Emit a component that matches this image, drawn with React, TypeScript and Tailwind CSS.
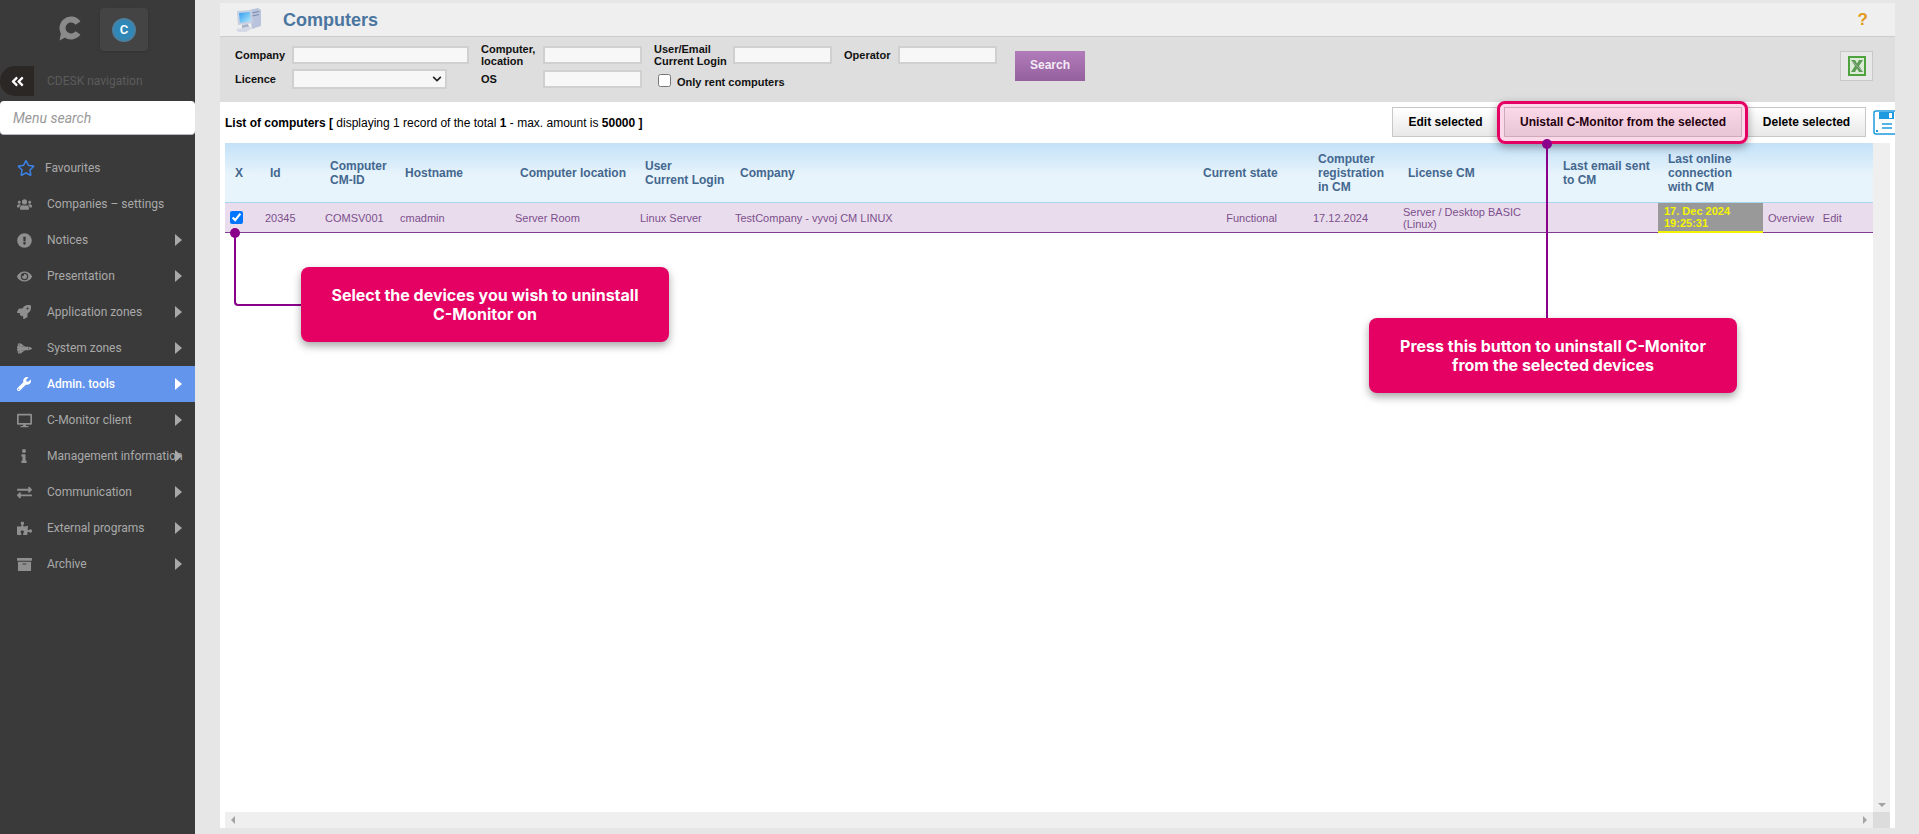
import type { ReactNode } from "react"
import {
    FaAngleDoubleLeft,
    FaArchive,
    FaChevronDown,
    FaDesktop,
    FaExchangeAlt,
    FaExclamationCircle,
    FaEye,
    FaInfo,
    FaPuzzlePiece,
    FaRegStar,
    FaRocket,
    FaSpaceShuttle,
    FaUsers,
    FaWrench,
} from "react-icons/fa"

const menu: { label: string; icon: ReactNode; active?: boolean }[] = [
    { label: "Notices", icon: <FaExclamationCircle size={15} /> },
    { label: "Presentation", icon: <FaEye size={15} /> },
    { label: "Application zones", icon: <FaRocket size={14} /> },
    { label: "System zones", icon: <FaSpaceShuttle size={15} /> },
    { label: "Admin. tools", icon: <FaWrench size={14} />, active: true },
    { label: "C-Monitor client", icon: <FaDesktop size={15} /> },
    { label: "Management information", icon: <FaInfo size={14} /> },
    { label: "Communication", icon: <FaExchangeAlt size={15} /> },
    { label: "External programs", icon: <FaPuzzlePiece size={15} /> },
    { label: "Archive", icon: <FaArchive size={15} /> },
]

function Sidebar() {
    return (
        <aside className="w-[195px] shrink-0 bg-[#3a3a3a] font-['Roboto',sans-serif] text-xs text-[#a9a9a9]">
            <div className="flex h-[66px] items-start pl-[59px] pt-2">
                <svg width="24" height="25" viewBox="0 0 24 25" className="mt-2">
                    <path d="M18.960 7.120A8.500 8.500 0 1 0 18.960 16.880" fill="none" stroke="#8a8a8a" strokeWidth="6" />
                    <path d="M0.500 24.500L8 20.500 2.500 14z" fill="#8a8a8a" />
                </svg>
                <div className="ml-[17px] flex h-[43px] w-[48px] items-center justify-center rounded bg-[#444444] shadow-sm">
                    <div className="flex size-6 items-center justify-center rounded-full border-2 border-[#4a7f9f] bg-[#2f88b8] text-[13px] font-semibold text-white">
                        C
                    </div>
                </div>
            </div>
            <div className="flex h-[30px] items-center">
                <div className="flex h-[30px] w-[34px] items-center justify-center rounded-l-full bg-[#2b2725] text-white">
                    <FaAngleDoubleLeft size={15} />
                </div>
                <span className="ml-[13px] text-[#5c5c5c]">CDESK navigation</span>
            </div>
            <div className="mt-[5px] flex h-[34px] items-center rounded-sm border-b border-[#b8b8c0] bg-white pl-[13px] text-sm italic text-[#999999]">
                Menu search
            </div>
            <nav className="mt-[15px]">
                <div className="flex h-9 items-center pl-[17px]">
                    <FaRegStar size={18} className="text-[#3b82e6]" />
                    <span className="ml-[10px]">Favourites</span>
                </div>
                <div className="flex h-9 items-center pl-[17px]">
                    <span className="flex w-[30px] text-[#8f8f8f]">
                        <FaUsers size={15} />
                    </span>
                    <span>Companies – settings</span>
                </div>
                {menu.map((item) => (
                    <div
                        key={item.label}
                        className={
                            item.active
                                ? "flex h-9 items-center bg-[#6495ed] pl-[17px] font-medium text-white"
                                : "flex h-9 items-center pl-[17px]"
                        }
                    >
                        <span className={item.active ? "flex w-[30px] text-white" : "flex w-[30px] text-[#8f8f8f]"}>
                            {item.icon}
                        </span>
                        <span className="w-[128px] whitespace-nowrap">{item.label}</span>
                        <span
                            className={
                                item.active
                                    ? "relative border-y-[6px] border-l-[7px] border-y-transparent border-l-white"
                                    : "relative border-y-[6px] border-l-[7px] border-y-transparent border-l-[#a9a9a9]"
                            }
                        />
                    </div>
                ))}
            </nav>
        </aside>
    )
}

function ComputerIcon() {
    return (
        <svg width="26" height="24" viewBox="0 0 26 24">
            <defs>
                <linearGradient id="screen" x1="0" y1="0" x2="1" y2="1">
                    <stop offset="0" stopColor="#2f9cf0" />
                    <stop offset="1" stopColor="#b8ecfb" />
                </linearGradient>
            </defs>
            <path d="M14 2l9-2 3 2v16l-9 3z" fill="#b9c4dc" />
            <path d="M17 5l7-1.500M17 8l7-1.500" stroke="#7886aa" strokeWidth="1" />
            <path d="M2 3l15-1 1 13-15 2z" fill="#c7cfe2" />
            <path d="M4 5l11-1 1 9-11 2z" fill="url(#screen)" />
            <path d="M7 17l6-1 1 3-7 1z" fill="#a8b2ca" />
            <path d="M1 21l14-2 3 1-7 4H3z" fill="#d5dae6" />
        </svg>
    )
}

function ExcelIcon() {
    return (
        <svg width="18" height="20" viewBox="0 0 18 20">
            <rect x="1" y="1" width="16" height="18" fill="#dcebd6" stroke="#4ea33f" strokeWidth="2" />
            <path d="M3 4h4l2 3.500L11 4h4l-4 6 4 6h-4l-2-3.500L7 16H3l4-6z" fill="#5c9d55" />
            <path d="M4 5l10 10" stroke="#a3a8a3" strokeWidth="1" />
        </svg>
    )
}

function SaveIcon() {
    return (
        <svg width="28" height="25" viewBox="0 0 28 25" className="-mr-[11px] ml-[2px] shrink-0">
            <path d="M3 1h20l4 4v17a2 2 0 0 1-2 2H3a2 2 0 0 1-2-2V3a2 2 0 0 1 2-2z" fill="#fff" stroke="#1e9be0" strokeWidth="1.500" />
            <path d="M6 2h15v7H6z" fill="#1e9be0" />
            <path d="M16 3h3v5h-3z" fill="#fff" />
            <path d="M9 14h10M9 18h10" stroke="#1e9be0" strokeWidth="1.500" />
            <rect x="3" y="20" width="2" height="2" fill="#1e9be0" />
        </svg>
    )
}

function FieldLabel({ children, className }: { children: ReactNode; className: string }) {
    return <div className={`text-[11px] leading-3 font-bold text-[#111] ${className}`}>{children}</div>
}

function Field({ className }: { className: string }) {
    return <input className={`h-[18px] border-2 border-[#d0d0d0] bg-[#f7f7f7] ${className}`} />
}

function FilterBar() {
    return (
        <div className="flex h-[65px] bg-[#dedede] pl-[15px]">
            <div className="flex w-[234px] flex-col pt-[9px]">
                <div className="flex h-[18px] items-center">
                    <FieldLabel className="w-[57px]">Company</FieldLabel>
                    <Field className="w-[177px]" />
                </div>
                <div className="mt-[5px] flex h-5 items-center">
                    <FieldLabel className="w-[57px]">Licence</FieldLabel>
                    <div className="relative h-5 w-[155px] border-2 border-[#d0d0d0] bg-[#f7f7f7]">
                        <FaChevronDown size={10} className="absolute right-[3px] top-[3px] text-[#222]" />
                    </div>
                </div>
            </div>
            <div className="ml-3 flex w-[161px] flex-col pt-[9px]">
                <div className="flex h-[18px] items-center">
                    <FieldLabel className="w-[62px]">
                        Computer,
                        <br />
                        location
                    </FieldLabel>
                    <Field className="w-[99px]" />
                </div>
                <div className="mt-[6px] flex h-[18px] items-center">
                    <FieldLabel className="w-[62px]">OS</FieldLabel>
                    <Field className="w-[99px]" />
                </div>
            </div>
            <div className="ml-3 flex w-[178px] flex-col pt-[9px]">
                <div className="flex h-[18px] items-center">
                    <FieldLabel className="w-[79px]">
                        User/Email
                        <br />
                        Current Login
                    </FieldLabel>
                    <Field className="w-[99px]" />
                </div>
                <label className="mt-[10px] flex items-start pl-[4px]">
                    <input type="checkbox" className="m-0 size-[13px]" />
                    <span className="ml-[6px] text-[11px] font-bold text-[#111]">Only rent computers</span>
                </label>
            </div>
            <div className="ml-3 flex h-fit items-center pt-[9px]">
                <FieldLabel className="w-[54px]">Operator</FieldLabel>
                <Field className="w-[99px]" />
            </div>
            <div className="ml-[18px] mt-[14px] flex h-[30px] w-[70px] items-center justify-center bg-gradient-to-b from-[#b27cba] to-[#95609e] pb-[2px] text-xs font-bold text-[#f4eaf6]">
                Search
            </div>
            <div className="ml-auto mr-[22px] mt-[14px] flex h-[30px] w-[33px] items-center justify-center border border-[#c8c8c8] bg-[#e8e8e8]">
                <ExcelIcon />
            </div>
        </div>
    )
}

const cols = [35, 60, 75, 115, 125, 95, 463, 115, 90, 155, 105, 105, 110]

const headers: ReactNode[] = [
    "X",
    "Id",
    <>Computer<br />CM-ID</>,
    "Hostname",
    "Computer location",
    <>User<br />Current Login</>,
    "Company",
    "Current state",
    <>Computer<br />registration<br />in CM</>,
    "License CM",
    <>Last email sent<br />to CM</>,
    <>Last online<br />connection<br />with CM</>,
    "",
]

function ComputersTable() {
    return (
        <table className="w-[1648px] table-fixed border-collapse text-[11px] text-[#7c4f8c]">
            <colgroup>
                {cols.map((w, i) => (
                    <col key={i} style={{ width: w }} />
                ))}
            </colgroup>
            <thead>
                <tr className="h-[59px] bg-gradient-to-b from-[#c3e1f8] to-[#e8f4fb] to-55% text-left text-xs leading-[14px] font-bold text-[#44678f]">
                    {headers.map((h, i) => (
                        <th key={i} className="pl-[10px] pt-[2px] font-bold">
                            {h}
                        </th>
                    ))}
                </tr>
            </thead>
            <tbody>
                <tr className="h-[30px] border-t border-b border-t-[#a8d4ee] border-b-[#7f3f8f] bg-[#e9dded] leading-3">
                    <td className="pl-[5px]">
                        <input type="checkbox" defaultChecked className="m-0 block size-[13px]" />
                    </td>
                    <td className="pl-[5px] pt-[2px]">20345</td>
                    <td className="pl-[5px] pt-[2px]">COMSV001</td>
                    <td className="pl-[5px] pt-[2px]">cmadmin</td>
                    <td className="pl-[5px] pt-[2px]">Server Room</td>
                    <td className="pl-[5px] pt-[2px]">Linux Server</td>
                    <td className="pl-[5px] pt-[2px]">TestCompany - vyvoj CM LINUX</td>
                    <td className="pr-[31px] pt-[2px] text-right">Functional</td>
                    <td className="pl-[5px] pt-[2px]">17.12.2024</td>
                    <td className="pl-[5px] pt-[2px]">
                        Server / Desktop BASIC
                        <br />
                        (Linux)
                    </td>
                    <td />
                    <td className="border-b-2 border-b-[#f2f200] bg-[#999999] pl-[6px] pt-[1px] font-bold text-[#f5f500]">
                        17. Dec 2024
                        <br />
                        19:25:31
                    </td>
                    <td className="pl-[5px] pt-[2px]">
                        Overview<span className="ml-[9px]">Edit</span>
                    </td>
                </tr>
            </tbody>
        </table>
    )
}

function Callouts() {
    return (
        <>
            <div className="absolute left-[234px] top-[233px] h-[73px] w-[67px] rounded-bl-sm border-b-2 border-l-2 border-[#8b008b]" />
            <div className="absolute left-[230px] top-[228px] size-[10px] rounded-full bg-[#8b008b]" />
            <div className="absolute left-[1546px] top-[144px] h-[174px] w-[2px] bg-[#8b008b]" />
            <div className="absolute left-[1497px] top-[101px] h-[43px] w-[251px] rounded-lg border-[3px] border-[#e50064] bg-[#e50064]/15 shadow-[0_3px_8px_rgba(0,0,0,0.35)]" />
            <div className="absolute left-[1542px] top-[139px] size-[10px] rounded-full bg-[#8b008b]" />
            <div className="absolute left-[301px] top-[267px] flex h-[75px] w-[368px] items-center justify-center rounded-lg bg-[#e50064] text-center font-['Inter',sans-serif] text-base leading-[19px] font-bold text-white shadow-[0_4px_8px_rgba(0,0,0,0.35)]">
                Select the devices you wish to uninstall
                <br />
                C-Monitor on
            </div>
            <div className="absolute left-[1369px] top-[318px] flex h-[75px] w-[368px] items-center justify-center rounded-lg bg-[#e50064] text-center font-['Inter',sans-serif] text-base leading-[19px] font-bold text-white shadow-[0_4px_8px_rgba(0,0,0,0.35)]">
                Press this button to uninstall C-Monitor
                <br />
                from the selected devices
            </div>
        </>
    )
}

function ActionButton({ label, className }: { label: string; className: string }) {
    return (
        <div
            className={`flex h-[30px] items-center justify-center border border-[#c8c8c8] bg-gradient-to-b from-white to-[#e8e8e8] text-xs font-bold text-black ${className}`}
        >
            {label}
        </div>
    )
}

export default function App() {
    return (
        <div className="relative flex h-screen w-full overflow-hidden bg-[#e6e6e6] font-['Liberation_Sans',Arial,sans-serif]">
            <Sidebar />
            <main className="flex flex-1 flex-col pb-[6px] pl-[25px] pr-[24px] pt-[3px]">
                <div className="flex flex-1 flex-col overflow-hidden bg-white">
                    <div className="flex h-[34px] items-center border-b border-[#cccccc] bg-[#efefef] pl-[15px]">
                        <ComputerIcon />
                        <h1 className="ml-[22px] pt-[1px] text-lg font-bold text-[#4a76a0]">Computers</h1>
                        <span className="ml-auto mr-[27px] text-[17px] font-bold text-[#e39a1c]">?</span>
                    </div>
                    <FilterBar />
                    <div className="flex h-[41px] items-center px-[5px]">
                        <p className="pt-[1px] text-xs text-black">
                            <b>List of computers [</b> displaying 1 record of the total <b>1</b> - max. amount is <b>50000 ]</b>
                        </p>
                        <div className="ml-auto flex items-center gap-[5px] pb-[1px]">
                            <ActionButton label="Edit selected" className="w-[107px]" />
                            <ActionButton label="Unistall C-Monitor from the selected" className="w-[238px]" />
                            <ActionButton label="Delete selected" className="w-[119px]" />
                            <SaveIcon />
                        </div>
                    </div>
                    <div className="flex min-h-0 flex-1 pl-[5px] pr-[5px]">
                        <div className="w-[1648px] shrink-0">
                            <ComputersTable />
                        </div>
                        <div className="flex w-[17px] flex-col items-center justify-end bg-[#efefef] pb-[5px]">
                            <span className="border-x-[4px] border-t-[4px] border-x-transparent border-t-[#a3a3a3]" />
                        </div>
                    </div>
                    <div className="flex h-4 pl-[5px] pr-[5px]">
                        <div className="flex w-[1648px] items-center justify-between bg-[#efefef] px-[6px]">
                            <span className="border-y-[4px] border-r-[4px] border-y-transparent border-r-[#a3a3a3]" />
                            <span className="border-y-[4px] border-l-[4px] border-y-transparent border-l-[#a3a3a3]" />
                        </div>
                        <div className="w-[17px] bg-[#dcdcdc]" />
                    </div>
                </div>
            </main>
            <Callouts />
        </div>
    )
}
